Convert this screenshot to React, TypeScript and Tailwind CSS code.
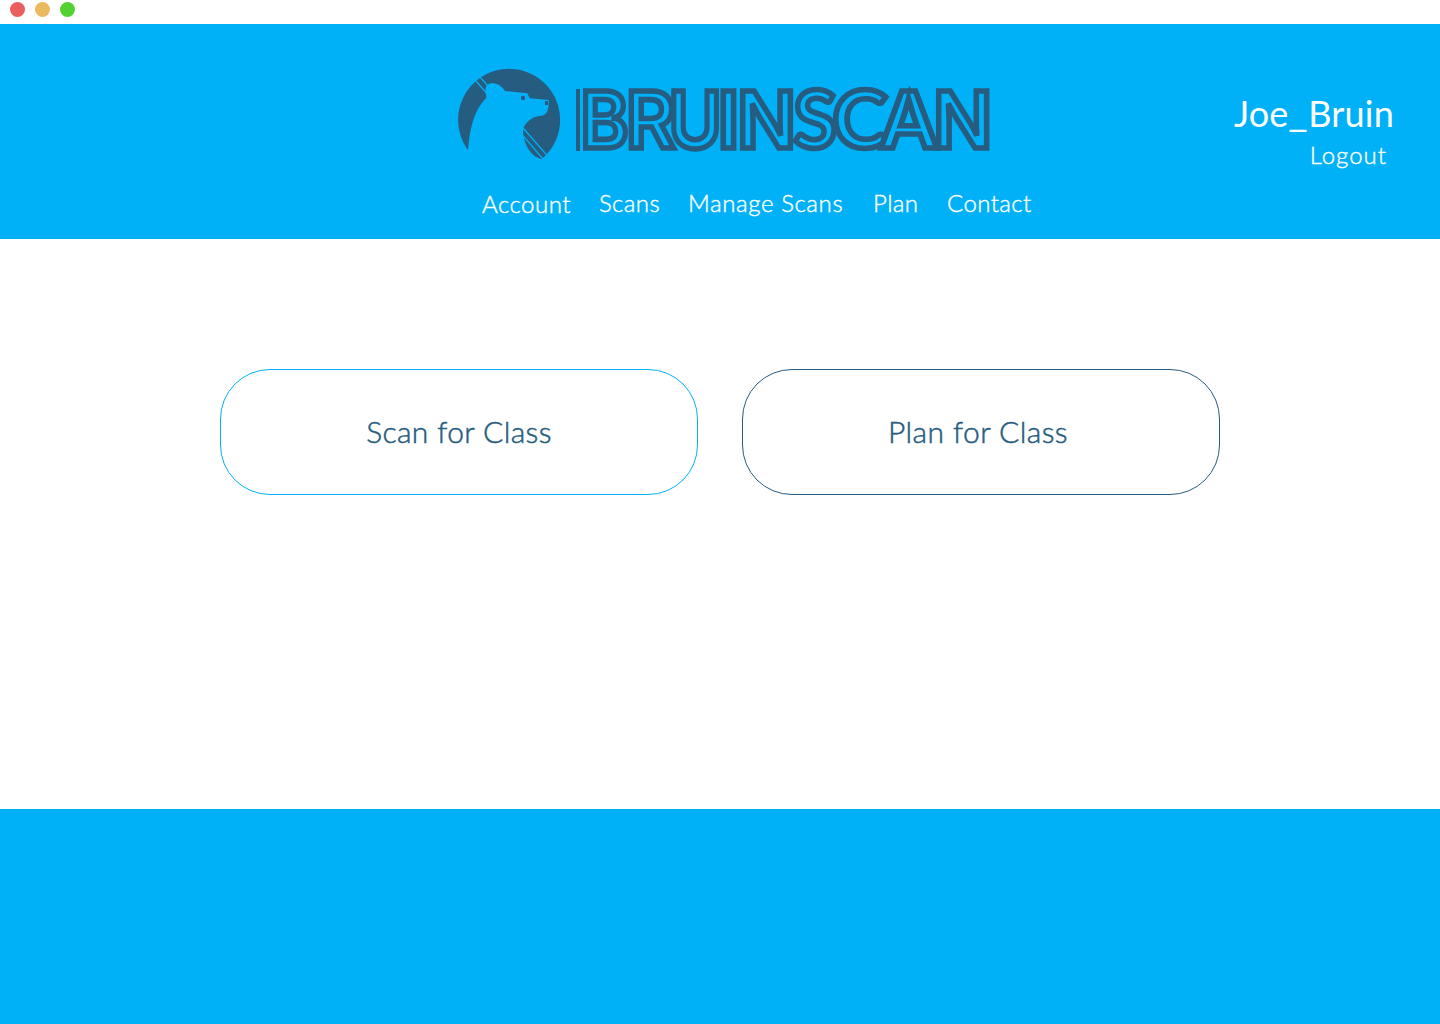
const letters = [
  { char: "B", x: 580.3, scale: 0.93, round: false },
  { char: "R", x: 625.8, scale: 0.965, round: false },
  { char: "U", x: 668.5, scale: 0.915, round: false },
  { char: "I", x: 717.5, scale: 1, round: false },
  { char: "N", x: 737, scale: 0.985, round: false },
  { char: "S", x: 793.6, scale: 0.99, round: true },
  { char: "C", x: 832.6, scale: 1.04, round: true },
  { char: "A", x: 879, scale: 1.04, round: false },
  { char: "N", x: 933, scale: 0.99, round: false },
];

function BearMark() {
  return (
    <svg width="120" height="105" viewBox="0 0 360 315" className="shrink-0" aria-hidden="true">
      <path
        fill="#265c80"
        d="M54 270 A153 153 0 1 1 274 298 C248 290 230 268 222 235 C218 220 218 210 222 200 C232 181 250 169 274 167 C290 166 296 152 297 120 L239 115 L232 100 L165 93 C154 76 140 69 124 70 C110 72 104 84 107 98 L109 113 C72 150 59 205 54 270 Z"
      />
      <g stroke="#00b1f7" strokeWidth="4">
        <path d="M78 63 L108 98 M91 52 L114 78 M219 204 L291 286 M219 227 L280 298" />
      </g>
      <circle cx="219" cy="114" r="6.5" fill="#265c80" />
      <path d="M285 123h9.500v12h-9.500z" fill="#265c80" />
    </svg>
  );
}

function Wordmark() {
  return (
    <svg width="420" height="80" viewBox="573 80 420 80" className="ml-[3px] shrink-0 overflow-visible" role="img" aria-label="BruinScan">
      <path d="M576 89h4v62h-4z" fill="#265c80" />
      <path d="M908 89l1.500-3.500 1.500 3.500z" fill="#265c80" />
      {letters.map(({ char, x, scale, round }, i) => (
        <text
          key={i}
          transform={`translate(${x} 148.200) scale(${scale} 1)`}
          className={
            round
              ? "fill-[#00b1f7] stroke-[#265c80] stroke-[5.6px] font-['Lato',sans-serif] text-[80px] font-bold"
              : "fill-[#00b1f7] stroke-[#265c80] stroke-[5.6px] font-['Inter',sans-serif] text-[79px] font-semibold"
          }
        >
          {char}
        </text>
      ))}
    </svg>
  );
}

export default function App() {
  return (
    <div className="flex h-[1024px] w-[1440px] flex-col bg-white font-['Lato',sans-serif]">
      <div className="flex h-6 shrink-0 gap-2.5 pl-2.5 pt-[2px]">
        <span className="size-[15px] rounded-full bg-[#eb5e5e]" />
        <span className="size-[15px] rounded-full bg-[#ebb95e]" />
        <span className="size-[15px] rounded-full bg-[#53d133]" />
      </div>

      <header className="flex h-[215px] shrink-0 bg-[#00b1f7] text-white">
        <div className="w-[1100px] pl-[450px] pt-9">
          <div className="flex items-start">
            <BearMark />
            <div className="pt-5">
              <Wordmark />
            </div>
          </div>
          <nav className="ml-8 mt-[22.5px] flex whitespace-nowrap text-2xl font-light leading-[30px] [-webkit-text-stroke:0.4px_white]">
            <a className="w-[117px] pt-px tracking-[0.5px]">Account</a>
            <a className="w-[89px] tracking-[0.4px]">Scans</a>
            <a className="w-[185px] tracking-[0.6px]">Manage Scans</a>
            <a className="w-[74px] tracking-[0.4px]">Plan</a>
            <a className="tracking-[0.4px]">Contact</a>
          </nav>
        </div>
        <div className="flex grow flex-col items-end whitespace-nowrap pr-[46px] pt-[67px]">
          <div className="text-4xl leading-[44px] tracking-[0.2px]">
            Joe<span className="inline-block origin-left scale-x-[1.2] pr-[3px]">_</span>Bruin
          </div>
          <a className="mr-[7px] mt-[4.5px] text-2xl font-light leading-[30px] tracking-[1px] [-webkit-text-stroke:0.4px_white]">Logout</a>
        </div>
      </header>

      <main className="flex grow items-start justify-center gap-11 pt-[130px] text-[30px] font-light text-[#265c80] [-webkit-text-stroke:0.5px_#265c80]">
        <button className="h-[126px] w-[478px] rounded-[50px] border border-[#00b1f7] pb-px tracking-[0.35px]">
          Scan for Class
        </button>
        <button className="h-[126px] w-[478px] rounded-[50px] border border-[#265c80] pb-px pr-1.5 tracking-[0.4px]">
          Plan for Class
        </button>
      </main>

      <footer className="h-[215px] shrink-0 bg-[#00b1f7]" />
    </div>
  );
}
